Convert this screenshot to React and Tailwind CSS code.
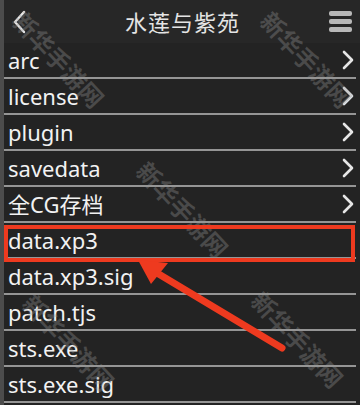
import React from "react";

const rows = [
  { name: "arc", dir: true },
  { name: "license", dir: true },
  { name: "plugin", dir: true },
  { name: "savedata", dir: true },
  { name: "全CG存档", dir: true },
  { name: "data.xp3" },
  { name: "data.xp3.sig" },
  { name: "patch.tjs" },
  { name: "sts.exe" },
  { name: "sts.exe.sig" },
];

const marks = [
  { x: 58, y: 60 },
  { x: 306, y: 60 },
  { x: 182, y: 210 },
  { x: 68, y: 343 },
  { x: 297, y: 340 },
];

function Chevron() {
  return (
    <svg width="14" height="22" viewBox="0 0 14 22" className="shrink-0">
      <path d="M3 3 L11 11 L3 19" fill="none" stroke="#e6e6e6" strokeWidth="2.6" strokeLinecap="round" strokeLinejoin="round" />
    </svg>
  );
}

export default function App() {
  return (
    <div
      className="relative w-[360px] h-[405px] overflow-hidden bg-[#232323] text-[#f2f2f2]"
      style={{ fontFamily: '"Noto Sans", "Noto Sans CJK SC", sans-serif' }}
    >
      <div className="absolute left-0 top-0 bottom-0 w-[4px] bg-[#4c4c4c]" />
      <div className="flex flex-col pl-[4px]">
        <div className="h-[43px] flex items-center justify-between bg-[#272727] pl-[8px] pr-[8px]">
          <svg width="16" height="26" viewBox="0 0 16 26">
            <path d="M12 3 L3 13 L12 23" fill="none" stroke="#e8e8e8" strokeWidth="2.4" strokeLinecap="round" strokeLinejoin="round" />
          </svg>
          <div className="text-[22px] leading-none text-[#e4e4e4] tracking-[1px] pl-[8px]">水莲与紫苑</div>
          <div className="flex flex-col gap-[3px] w-[23px]">
            <div className="h-[5px] rounded-[2px] bg-[#b8b8b8]" />
            <div className="h-[5px] rounded-[2px] bg-[#b8b8b8]" />
            <div className="h-[5px] rounded-[2px] bg-[#b8b8b8]" />
          </div>
        </div>
        {rows.map((r) => (
          <div
            key={r.name}
            className="h-[36px] flex items-center justify-between pl-[4px] pr-[1px] border-b-2 border-[#959595] mr-[4px]"
          >
            <span className="text-[22px] leading-none">{r.name}</span>
            {r.dir && <Chevron />}
          </div>
        ))}
      </div>

      {marks.map((m, i) => (
        <div
          key={i}
          className="absolute text-[24px] leading-none whitespace-nowrap text-[rgba(150,150,150,0.34)] font-bold"
          style={{ left: m.x, top: m.y, transform: "translate(-50%,-50%) rotate(47deg)" }}
        >
          新华手游网
        </div>
      ))}

      <div className="absolute left-[4px] top-[225px] w-[351px] h-[37px] border-[4px] border-[#ee3a1f]" />

      <svg className="absolute left-0 top-0" width="360" height="405" viewBox="0 0 360 405">
        <line x1="282" y1="348" x2="152" y2="270" stroke="#ee3a1f" strokeWidth="7" strokeLinecap="round" />
        <polygon points="138,260 168,263 151,284" fill="#ee3a1f" />
      </svg>
    </div>
  );
}
